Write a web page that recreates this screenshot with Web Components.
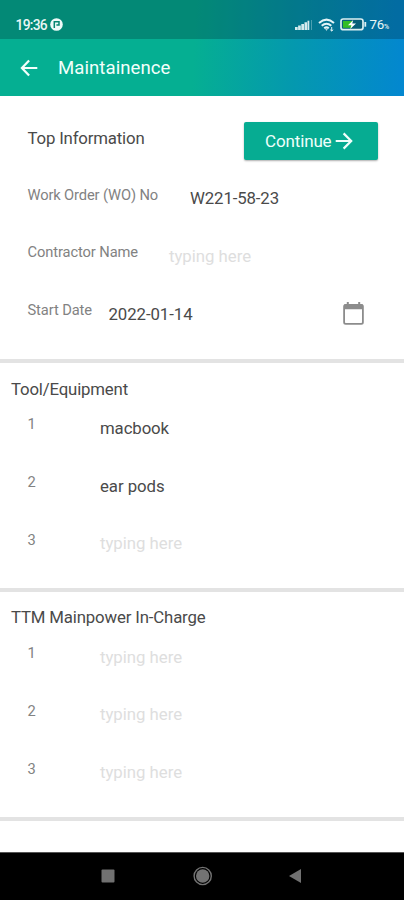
<!DOCTYPE html>
<html lang="en">
<head>
<meta charset="utf-8">
<title>Maintainence</title>
<style>
html,body{margin:0;height:100%;background:#fff}
body{font-family:Roboto,"Liberation Sans",sans-serif;overflow:hidden}
</style>
</head>
<body>
<maintenance-app></maintenance-app>
<script>
const define = (name, html, setup) => customElements.define(name, class extends HTMLElement {
  connectedCallback() {
    if (this.shadowRoot) return;
    const t = document.createElement('template');
    t.innerHTML = html;
    this.attachShadow({mode: 'open'}).append(t.content.cloneNode(true));
    if (setup) setup(this, this.shadowRoot);
  }
});

/* Text that spaces its letters to fill the width given in its "w" attribute. */
define('fit-text', `<style>
:host{display:inline-block;white-space:nowrap;line-height:20px;flex:none}
span{display:inline-block}
</style><span><slot></slot></span>`, (el, root) => {
  const s = root.querySelector('span');
  const w = parseFloat(el.getAttribute('w'));
  if (w) {
    const n = el.textContent.trim().length || 8;
    s.style.letterSpacing = (w - s.getBoundingClientRect().width) / n + 'px';
  }
});

define('status-bar', `<style>
:host{display:flex;height:39px;box-sizing:border-box;padding:10px 14px 0 15.5px;align-items:center;
background:rgba(0,25,35,.25);color:#e9f7f5;font-size:13.8px;font-weight:500}
svg{display:block;flex:none}
.sp{flex:1}
.t{margin-right:3px}
.pct{font-size:13.4px;font-weight:400}
.pc{font-size:7px;margin:4px 0 0 0}
</style>
<fit-text class="t" w="31.5">19:36</fit-text>
<svg width="13" height="13" viewBox="0 0 13 13"><circle cx="6.5" cy="6.5" r="6.3" fill="#eefaf8"/><path d="M4.3 10V3.8H9V7H6.4" fill="none" stroke="#078570" stroke-width="1.5"/></svg>
<span class="sp"></span>
<svg width="18" height="12" viewBox="0 0 18 12" fill="#d5ebee"><path d="M0 8h2.7v3H0zM3.1 6.5h2.7V11H3.1zM6.3 5H9v6H6.3zM9.5 3.2h2.6V11H9.5z"/><path d="M12.5 1.7h1.8V11h-1.8z"/><path d="M16.2 1h.8v10h-.8z" opacity=".45"/></svg>
<svg style="margin-left:5px" width="18" height="14" viewBox="0 0 18 14" fill="none" stroke="#e4f4f7" stroke-width="2"><path d="M1 4.9Q8.5-1.7 16 4.9M3.7 7.8Q8.5 3.6 13.3 7.8M6.2 10.3Q8.5 8.4 10.8 10.3"/><path d="M7.2 11.3h2.6l-1.3 1.5z" fill="#e4f4f7" stroke="none"/><path d="M13.7 9v4M12.2 11.7l1.5 1.3 1.5-1.3" stroke-width="1"/></svg>
<svg style="margin:0 3px 0 4px" width="27" height="13" viewBox="0 0 27 13"><rect x="1" y="1" width="22" height="10.7" rx="2.3" fill="#075f79" stroke="#dceff2" stroke-width="1.7"/><path d="M3 3h9v6.8H3z" fill="#33bd25"/><path d="M24.4 4h1.8v4.7h-1.8z" fill="#dceff2"/><path d="M13.2 2 8 7.2h3.4L10.2 11 16 5.6h-3.7z" fill="#fff"/></svg>
<fit-text class="pct" w="14.5">76</fit-text><fit-text class="pc" w="6">%</fit-text>`);

define('app-bar', `<style>
:host{display:flex;height:57px;align-items:center;padding-left:20px;color:#f2fffb;font-size:18.6px}
svg{margin-right:20px}
</style>
<svg width="18" height="18" viewBox="0 0 18 18" fill="none" stroke="#f2fffb" stroke-width="2.2"><path d="M17.3 9H2.4M9.1 1.4 1.9 9l7.2 7.6"/></svg>
<slot></slot>`);

define('continue-button', `<style>
:host{display:flex;width:134px;height:37.5px;box-sizing:border-box;padding-left:21px;align-items:center;
background:#06ac92;color:#effffb;border-radius:2px;box-shadow:0 1px 2px rgba(0,0,0,.32);font-size:17px}
svg{margin-left:3px}
</style><fit-text w="66.5">Continue</fit-text>
<svg width="18" height="18" viewBox="0 0 18 18" fill="none" stroke="#effffb" stroke-width="2.2"><path d="M.7 9h15M8.6 1.4 16.2 9l-7.6 7.6"/></svg>`);

define('form-section', `<style>
:host{display:block;border-bottom:4px solid #e3e3e3;padding-bottom:16.4px}
header{display:flex;padding:15.2px 0 0 11px;font-size:16.8px;color:#4a4a4a}
</style><header><slot name="title"></slot></header><slot></slot>`);

define('top-section', `<style>
:host{display:block;border-bottom:4px solid #e3e3e3;padding-bottom:17.2px}
header{display:flex;justify-content:space-between;align-items:flex-start;height:47px;padding:26px 26px 0 27.5px;font-size:16.8px;color:#4a4a4a}
header fit-text{margin-top:6.4px}
</style><header><fit-text w="117">Top Information</fit-text><continue-button></continue-button></header><slot></slot>`);

define('form-row', `<style>
:host{display:flex;height:57.75px;align-items:center;padding:.6px 39px 0 27.5px;box-sizing:border-box}
.l{font-size:14.7px;color:#828282;padding-bottom:7px;width:var(--lw,72.5px);flex:none;display:flex}
.v{font-size:16.8px;color:#4a4a4a;flex:1;display:flex}
:host([empty]) .v{color:#dedede}
</style><span class="l"><slot name="label"></slot></span><span class="v"><slot></slot></span><slot name="icon"></slot>`);

define('calendar-icon', `<style>:host,svg{display:block}</style>
<svg width="23" height="25" viewBox="0 0 23 25"><rect x="2.1" y="3.8" width="18.8" height="19.1" rx="1.6" fill="#fff" stroke="#8c8c8c" stroke-width="1.8"/><path d="M2 3.5h19v4.7H2zM4.8 1h2v3h-2zM16.2 1h2v3h-2z" fill="#8c8c8c"/></svg>`);

define('nav-bar', `<style>
:host{display:flex;justify-content:space-between;height:48px;background:#000;align-items:center;padding:0 102px 1px 101px;box-sizing:border-box;border-top:1px solid #555}
svg{display:block}
</style>
<svg width="14" height="14"><rect x=".5" y=".5" width="13" height="13" rx="1" fill="#717171"/></svg>
<svg width="20" height="20" viewBox="0 0 20 20"><circle cx="10.7" cy="10" r="8.6" fill="none" stroke="#737373" stroke-width="1.4"/><circle cx="10.7" cy="10" r="6.7" fill="#737373"/></svg>
<svg width="14" height="16" viewBox="0 0 14 16"><path d="M13 1v14L1 8z" fill="#717171"/></svg>`);

define('maintenance-app', `<style>
:host{display:flex;flex-direction:column;height:900px;width:404px;background:#fff;overflow:hidden}
.top{flex:none;background:linear-gradient(93deg,#05af92 0,#05af92 48%,#0499ae 72%,#0387d0 100%)}
main{flex:1;min-height:0}
nav-bar{flex:none}
</style>
<div class="top"><status-bar></status-bar><app-bar><fit-text w="112.5">Maintainence</fit-text></app-bar></div>
<main>
<top-section>
<form-row style="--lw:162.5px"><fit-text slot="label" w="130.5">Work Order (WO) No</fit-text><fit-text w="89">W221-58-23</fit-text></form-row>
<form-row empty style="--lw:141.5px"><fit-text slot="label" w="110.5">Contractor Name</fit-text><fit-text w="82">typing here</fit-text></form-row>
<form-row style="--lw:81px"><fit-text slot="label" w="64.5">Start Date</fit-text><fit-text w="84">2022-01-14</fit-text><calendar-icon slot="icon"></calendar-icon></form-row>
</top-section>
<form-section><fit-text slot="title" w="117">Tool/Equipment</fit-text>
<form-row><fit-text slot="label">1</fit-text><fit-text w="69">macbook</fit-text></form-row>
<form-row><fit-text slot="label">2</fit-text><fit-text w="64.5">ear pods</fit-text></form-row>
<form-row empty><fit-text slot="label">3</fit-text><fit-text w="82">typing here</fit-text></form-row>
</form-section>
<form-section><fit-text slot="title" w="194.5">TTM Mainpower In-Charge</fit-text>
<form-row empty><fit-text slot="label">1</fit-text><fit-text w="82">typing here</fit-text></form-row>
<form-row empty><fit-text slot="label">2</fit-text><fit-text w="82">typing here</fit-text></form-row>
<form-row empty><fit-text slot="label">3</fit-text><fit-text w="82">typing here</fit-text></form-row>
</form-section>
</main>
<nav-bar></nav-bar>`);
</script>
</body>
</html>
